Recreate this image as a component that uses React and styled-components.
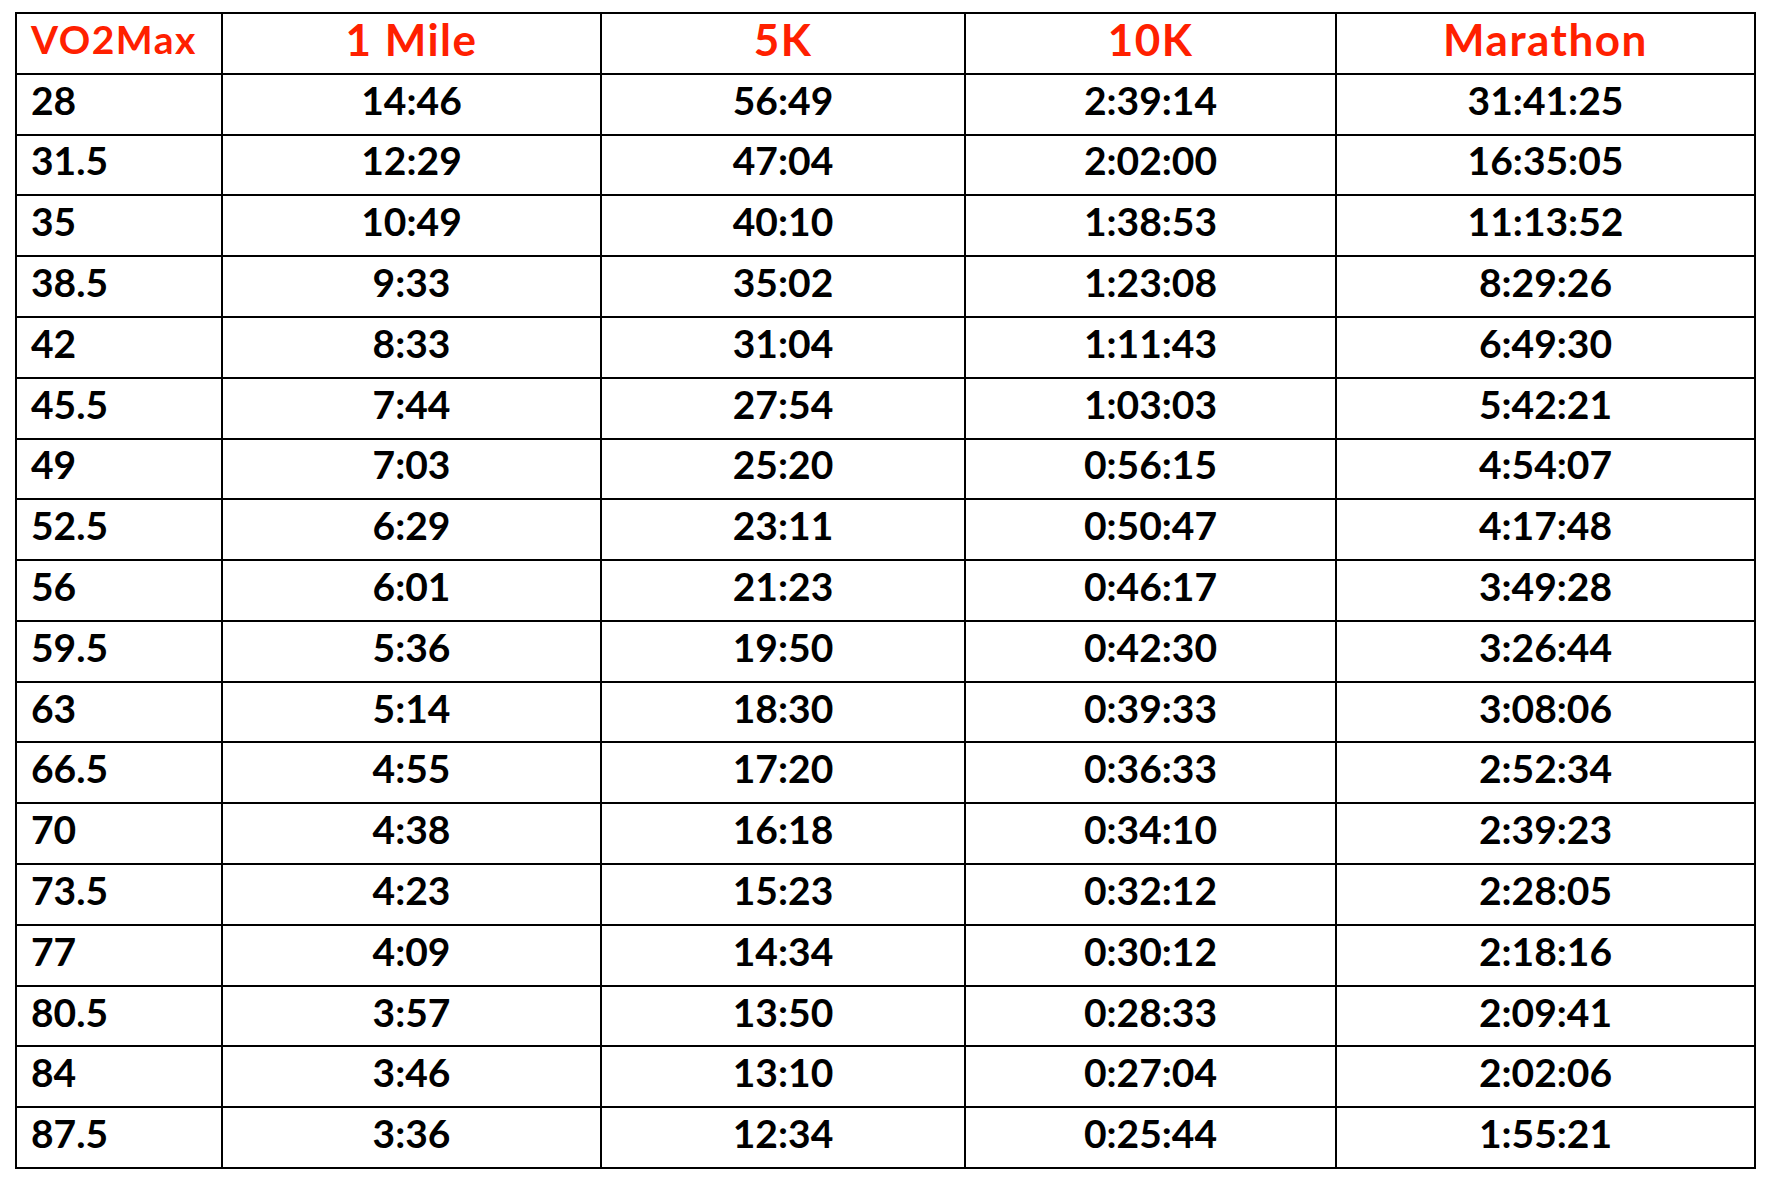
import React from 'react';
import styled, { createGlobalStyle } from 'styled-components';

const Global = createGlobalStyle`
  html, body { margin: 0; padding: 0; background: #fff; }
`;

const Page = styled.div`
  padding: 12px 0 0 15px;
  width: 1770px;
  height: 1186px;
  box-sizing: border-box;
  font-family: Lato, "Open Sans", sans-serif;
  font-weight: 700;
`;

const Grid = styled.div`
  display: grid;
  grid-template-columns: 206px 379px 364px 371px 419px;
  grid-template-rows: repeat(19, 1fr);
  width: fit-content;
  height: 1155px;
  border-top: 2px solid #000;
  border-left: 2px solid #000;
`;

const Cell = styled.div`
  display: flex;
  align-items: center;
  justify-content: ${p => (p.$first ? 'flex-start' : 'center')};
  padding: 0 0 8px ${p => (p.$first ? '14px' : '0')};
  border-right: 2px solid #000;
  border-bottom: 2px solid #000;
  color: ${p => (p.$head ? '#ff2000' : '#000')};
  font-size: ${p => (p.$head && !p.$first ? '44px' : '39px')};
  letter-spacing: ${p => (p.$head ? '1.5px' : '0')};
  line-height: 1;
  white-space: nowrap;
`;

const heads = ['VO2Max', '1 Mile', '5K', '10K', 'Marathon'];

const rows = [
  ['28', '14:46', '56:49', '2:39:14', '31:41:25'],
  ['31.5', '12:29', '47:04', '2:02:00', '16:35:05'],
  ['35', '10:49', '40:10', '1:38:53', '11:13:52'],
  ['38.5', '9:33', '35:02', '1:23:08', '8:29:26'],
  ['42', '8:33', '31:04', '1:11:43', '6:49:30'],
  ['45.5', '7:44', '27:54', '1:03:03', '5:42:21'],
  ['49', '7:03', '25:20', '0:56:15', '4:54:07'],
  ['52.5', '6:29', '23:11', '0:50:47', '4:17:48'],
  ['56', '6:01', '21:23', '0:46:17', '3:49:28'],
  ['59.5', '5:36', '19:50', '0:42:30', '3:26:44'],
  ['63', '5:14', '18:30', '0:39:33', '3:08:06'],
  ['66.5', '4:55', '17:20', '0:36:33', '2:52:34'],
  ['70', '4:38', '16:18', '0:34:10', '2:39:23'],
  ['73.5', '4:23', '15:23', '0:32:12', '2:28:05'],
  ['77', '4:09', '14:34', '0:30:12', '2:18:16'],
  ['80.5', '3:57', '13:50', '0:28:33', '2:09:41'],
  ['84', '3:46', '13:10', '0:27:04', '2:02:06'],
  ['87.5', '3:36', '12:34', '0:25:44', '1:55:21'],
];

export default function App() {
  return (
    <Page>
      <Global />
      <Grid>
        {heads.map((h, i) => (
          <Cell key={h} $head $first={i === 0}>{h}</Cell>
        ))}
        {rows.map(r =>
          r.map((v, i) => (
            <Cell key={r[0] + i} $first={i === 0}>{v}</Cell>
          ))
        )}
      </Grid>
    </Page>
  );
}
